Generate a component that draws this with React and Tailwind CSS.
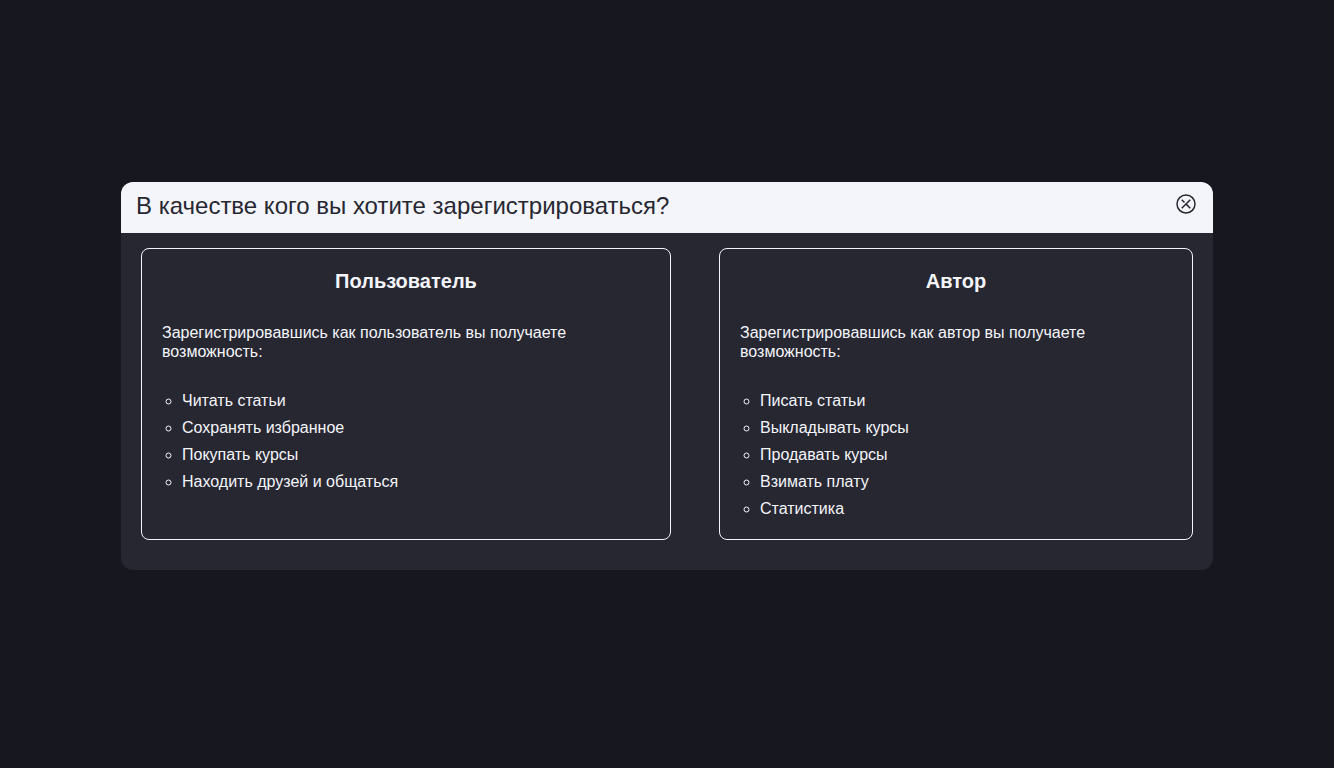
const roles = [
  {
    title: "Пользователь",
    intro: "Зарегистрировавшись как пользователь вы получаете возможность:",
    features: ["Читать статьи", "Сохранять избранное", "Покупать курсы", "Находить друзей и общаться"],
    size: "md:basis-[530px]",
  },
  {
    title: "Автор",
    intro: "Зарегистрировавшись как автор вы получаете возможность:",
    features: ["Писать статьи", "Выкладывать курсы", "Продавать курсы", "Взимать плату", "Статистика"],
    size: "md:basis-[474px]",
  },
];

function CloseIcon() {
  return (
    <svg viewBox="0 0 20 20" className="size-5" fill="none" stroke="currentColor" strokeWidth="1.5" aria-hidden="true">
      <circle cx="10" cy="10" r="9" />
      <path d="M14.3 5.7l-8.6 8.6M5.7 5.7l2.8 2.8M10.4 10.4l3.9 3.9" />
    </svg>
  );
}

function RoleCard({ title, intro, features, size }) {
  return (
    <button type="button" className={`flex flex-col rounded-lg border border-[#f4f5fa] px-5 pt-5 pb-[17px] text-left ${size}`}>
      <span className="self-center text-xl leading-6 font-bold">{title}</span>
      <span className="mt-[30px] block leading-[19px]">{intro}</span>
      <ul className="mt-[26px] list-[circle] pl-5 leading-[27px]">
        {features.map((feature) => (
          <li key={feature}>{feature}</li>
        ))}
      </ul>
    </button>
  );
}

export default function App() {
  return (
    <main className="flex min-h-screen items-center justify-center bg-[#17171f] px-4 pb-4 font-['Liberation_Sans',Arial,sans-serif] text-base text-[#f4f5fa]">
      <section role="dialog" aria-labelledby="dialog-title" className="w-full max-w-[1092px] overflow-hidden rounded-xl bg-[#272732]">
        <header className="flex items-start justify-between bg-[#f4f5fa] px-[15px] pt-2.5 pb-[13px] text-[#272732]">
          <h1 id="dialog-title" className="text-2xl leading-7">В качестве кого вы хотите зарегистрироваться?</h1>
          <button type="button" aria-label="Закрыть" className="mt-0.5 mr-0.5">
            <CloseIcon />
          </button>
        </header>
        <div className="flex flex-col justify-between gap-12 px-5 pt-[15px] pb-[30px] md:flex-row">
          {roles.map((role) => (
            <RoleCard key={role.title} {...role} />
          ))}
        </div>
      </section>
    </main>
  );
}
